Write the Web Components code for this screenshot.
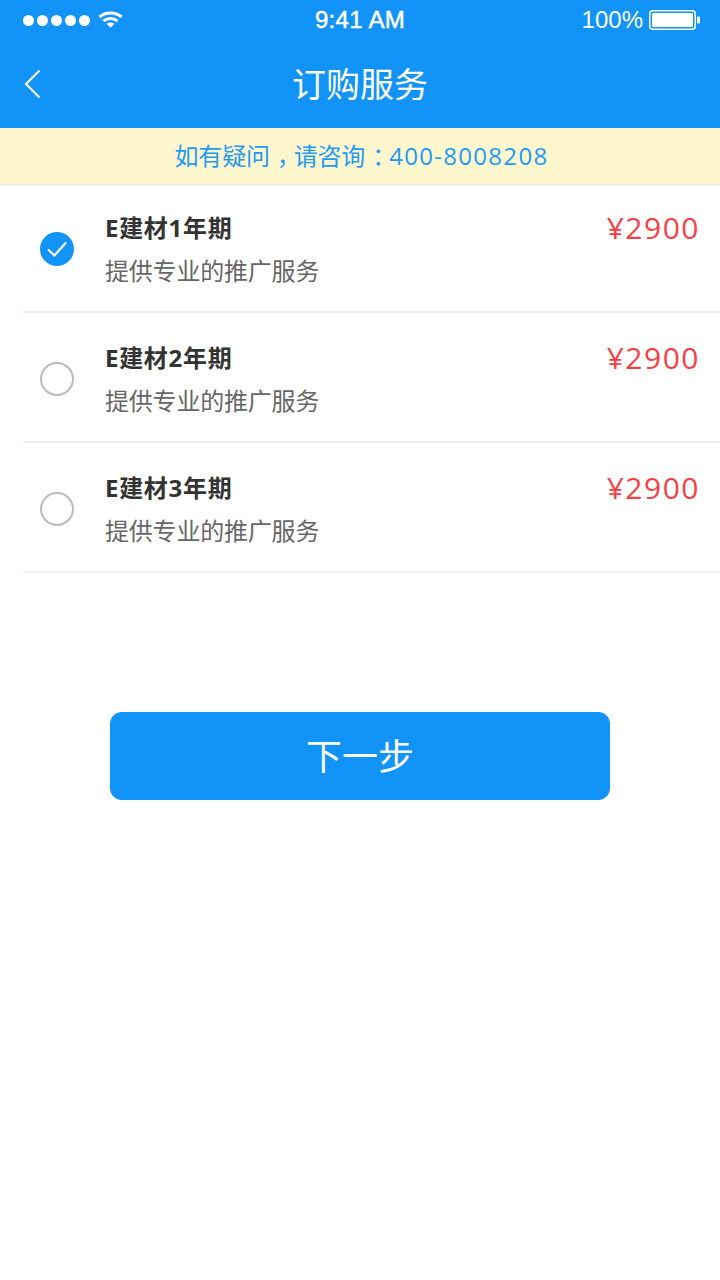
<!DOCTYPE html>
<html lang="zh">
<head>
<meta charset="utf-8">
<title>订购服务</title>
<style>
  html, body { margin: 0; padding: 0; background: #fff; }
  body { width: 720px; height: 1280px; overflow: hidden; font-family: "Open Sans", "Noto Sans CJK SC", sans-serif; }
  /* the reference centers its full-width punctuation in the em box */
  .punct { padding-left: 7px; letter-spacing: -7px; }
  .num { letter-spacing: 1.3px; }
</style>
</head>
<body>
<app-header title="订购服务"></app-header>
<notice-bar>如有疑问<span class="punct">，</span>请咨询<span class="punct">：</span><span class="num">400-8008208</span></notice-bar>
<service-list>
  <service-item name="E建材1年期" desc="提供专业的推广服务" price="¥2900" checked></service-item>
  <service-item name="E建材2年期" desc="提供专业的推广服务" price="¥2900"></service-item>
  <service-item name="E建材3年期" desc="提供专业的推广服务" price="¥2900"></service-item>
</service-list>
<next-button>下一步</next-button>

<script>
class AppHeader extends HTMLElement {
    constructor() {
        super();
        const shadow = this.attachShadow({ mode: 'open' });
        shadow.innerHTML = `
      <style>
        :host { display: block; height: 128px; background: #1193f8; color: #fff; }
        .status { height: 40px; display: flex; align-items: center; justify-content: space-between; padding: 0 20px 0 23px; position: relative; }
        .left, .right { display: flex; align-items: center; }
        .dots { display: flex; gap: 3px; margin-right: 8px; }
        .dots i { width: 11px; height: 11px; border-radius: 50%; background: #fff; display: block; }
        .time { position: absolute; left: 0; right: 0; top: 0; text-align: center; font: 400 24px/40px "Liberation Sans", sans-serif; letter-spacing: 0.3px; -webkit-text-stroke: 0.5px #fff; }
        .pct { font: 400 24px/40px "Liberation Sans", sans-serif; margin-right: 6px; }
        .nav { height: 88px; display: flex; align-items: center; justify-content: center; position: relative; }
        .back { position: absolute; left: 24px; top: 29px; }
        h1 { margin: -2px 0 0; font: 400 34px/1 "Noto Sans CJK SC", sans-serif; }
      </style>
      <div class="status">
        <div class="left">
          <div class="dots"><i></i><i></i><i></i><i></i><i></i></div>
          <svg width="26" height="18" viewBox="0 0 26 18">
            <path d="M1.500 6C7.500 .8 17.500 .8 23.500 6" fill="none" stroke="#fff" stroke-width="3"/>
            <path d="M5.500 10C9.500 6.800 15.500 6.800 19.500 10" fill="none" stroke="#fff" stroke-width="3"/>
            <path d="M8.500 12.800C11 11 14 11 16.500 12.800L12.500 16.800Z" fill="#fff"/>
          </svg>
        </div>
        <div class="time">9:41 AM</div>
        <div class="right">
          <span class="pct">100%</span>
          <svg width="51" height="20" viewBox="0 0 51 20">
            <rect x="0.750" y="0.750" width="45.500" height="18.500" rx="3" fill="none" stroke="#fff" stroke-width="1.500"/>
            <rect x="3" y="3" width="41" height="14" rx="1" fill="#fff"/>
            <rect x="48" y="6.500" width="3" height="7" rx="1" fill="#fff"/>
          </svg>
        </div>
      </div>
      <div class="nav">
        <svg class="back" width="18" height="30" viewBox="0 0 18 30">
          <path d="M15.500 1.500L2 15L15.500 28.500" fill="none" stroke="#fff" stroke-width="2"/>
        </svg>
        <h1></h1>
      </div>
    `;
        shadow.querySelector('h1').textContent = this.getAttribute('title');
    }
}

class NoticeBar extends HTMLElement {
    constructor() {
        super();
        const shadow = this.attachShadow({ mode: 'open' });
        shadow.innerHTML = `
      <style>
        :host { display: block; height: 56px; padding-left: 3px; background: #fef6cd; border-bottom: 2px solid #eeeeee; color: #1e9bf5; text-align: center; font-size: 24px; line-height: 55px; letter-spacing: -0.2px; }
      </style>
      <slot></slot>
    `;
    }
}

class ServiceList extends HTMLElement {
    constructor() {
        super();
        const shadow = this.attachShadow({ mode: 'open' });
        shadow.innerHTML = `
      <style>
        :host { display: block; margin-top: -3px; }
      </style>
      <slot></slot>
    `;
    }
}

class ServiceItem extends HTMLElement {
    constructor() {
        super();
        const shadow = this.attachShadow({ mode: 'open' });
        const checked = this.hasAttribute('checked');
        shadow.innerHTML = `
      <style>
        :host { display: block; height: 130px; padding-left: 23px; box-sizing: border-box; }
        .row { height: 128px; box-sizing: content-box; border-bottom: 2px solid #eeeeee; display: flex; padding-right: 20px; }
        .radio { width: 34px; height: 34px; margin: 49px 31px 0 17px; flex: none; }
        .text { flex: 1; padding-top: 27px; }
        .name { font-size: 24px; font-weight: 700; line-height: 36px; color: #333; letter-spacing: 0.7px; }
        .desc { font-size: 24px; line-height: 36px; margin-top: 7px; color: #666; letter-spacing: -0.2px; }
        .price { padding-top: 23px; font-size: 30px; line-height: 44px; color: #fa3e44; letter-spacing: 1.5px; }
      </style>
      <div class="row">
        <svg class="radio" viewBox="0 0 34 34">
          ${checked
            ? '<circle cx="17" cy="17" r="17" fill="#1193f8"/><path d="M8 17.500L14.500 23.500L26 10.500" fill="none" stroke="#fff" stroke-width="2.200"/>'
            : '<circle cx="17" cy="17" r="16" fill="none" stroke="#bbb" stroke-width="2"/>'}
        </svg>
        <div class="text">
          <div class="name"></div>
          <div class="desc"></div>
        </div>
        <div class="price"></div>
      </div>
    `;
        shadow.querySelector('.name').textContent = this.getAttribute('name');
        shadow.querySelector('.desc').textContent = this.getAttribute('desc');
        shadow.querySelector('.price').textContent = this.getAttribute('price');
    }
}

class NextButton extends HTMLElement {
    constructor() {
        super();
        const shadow = this.attachShadow({ mode: 'open' });
        shadow.innerHTML = `
      <style>
        :host { display: flex; justify-content: center; padding-top: 139px; }
        button { width: 500px; height: 88px; border: 0; border-radius: 12px; background: #1193f8; color: #fff; font: 400 36px/84px "Noto Sans CJK SC", sans-serif; padding: 0 0 4px; }
      </style>
      <button><slot></slot></button>
    `;
    }
}

customElements.define('app-header', AppHeader);
customElements.define('notice-bar', NoticeBar);
customElements.define('service-list', ServiceList);
customElements.define('service-item', ServiceItem);
customElements.define('next-button', NextButton);
</script>
</body>
</html>
